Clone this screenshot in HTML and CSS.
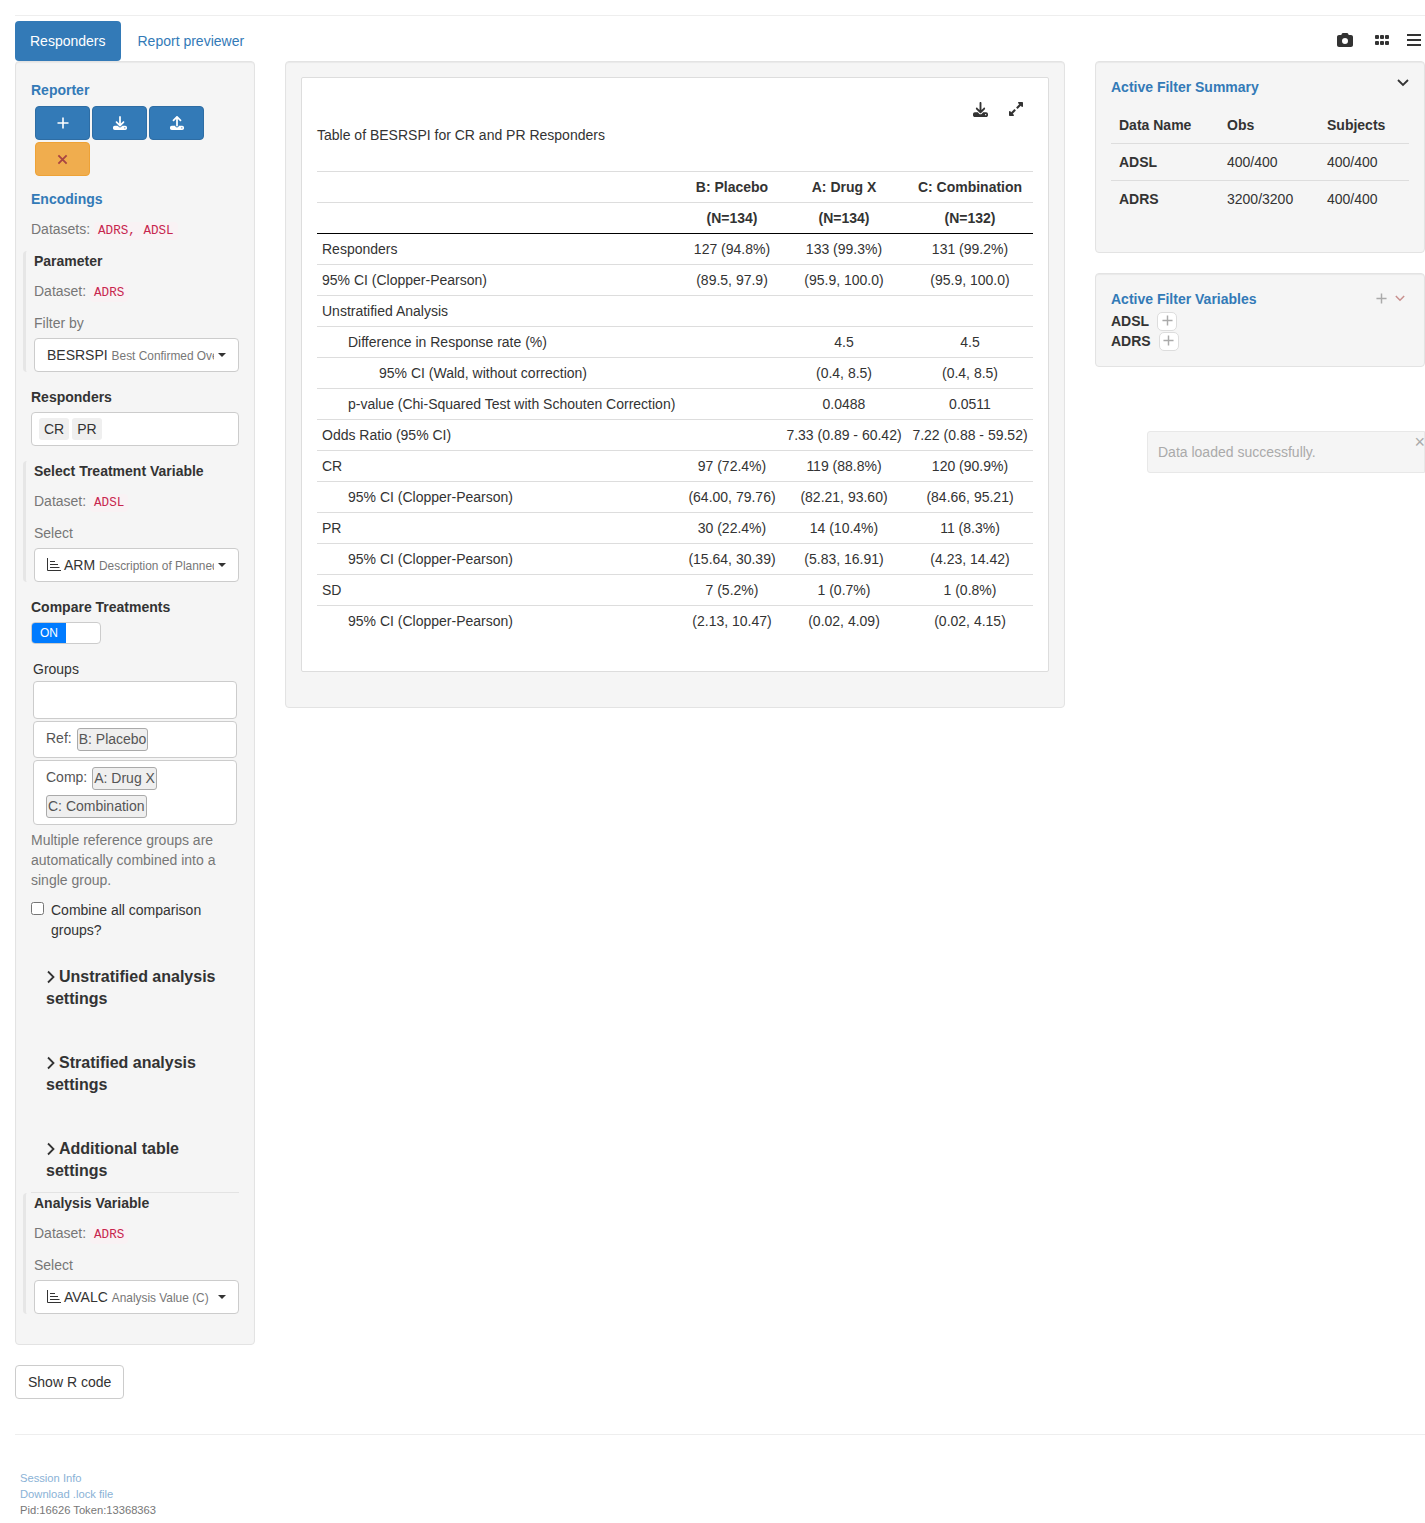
FILE: index.html
```html
<!DOCTYPE html>
<html lang="en">
<head>
<meta charset="UTF-8">
<meta name="viewport" content="width=device-width, initial-scale=1.0">
<title>Responders</title>
<link rel="stylesheet" href="styles.css">
</head>
<body>
<svg class="defs" aria-hidden="true">
  <symbol id="i-download" viewBox="0 0 512 512"><path d="M288 32c0-17.7-14.3-32-32-32s-32 14.3-32 32V274.7l-73.4-73.4c-12.5-12.5-32.8-12.5-45.3 0s-12.5 32.8 0 45.3l128 128c12.5 12.5 32.8 12.5 45.3 0l128-128c12.5-12.5 12.5-32.8 0-45.3s-32.8-12.5-45.3 0L288 274.7V32zM64 352c-35.3 0-64 28.7-64 64v32c0 35.3 28.7 64 64 64H448c35.3 0 64-28.7 64-64V416c0-35.3-28.7-64-64-64H346.5l-45.3 45.3c-25 25-65.5 25-90.5 0L165.5 352H64zm368 56a24 24 0 1 1 0 48 24 24 0 1 1 0-48z"/></symbol>
  <symbol id="i-upload" viewBox="0 0 512 512"><path d="M288 109.3V352c0 17.7-14.3 32-32 32s-32-14.3-32-32V109.3l-73.4 73.4c-12.5 12.5-32.8 12.5-45.3 0s-12.5-32.8 0-45.3l128-128c12.5-12.5 32.8-12.5 45.3 0l128 128c12.5 12.5 12.5 32.8 0 45.3s-32.8 12.5-45.3 0L288 109.3zM64 352H192c0 35.3 28.7 64 64 64s64-28.7 64-64H448c35.3 0 64 28.7 64 64v32c0 35.3-28.7 64-64 64H64c-35.3 0-64-28.7-64-64V416c0-35.3 28.7-64 64-64zM432 456a24 24 0 1 0 0-48 24 24 0 1 0 0 48z"/></symbol>
  <symbol id="i-camera" viewBox="0 0 512 512"><path d="M149.1 64.8L138.7 96H64C28.7 96 0 124.7 0 160V416c0 35.3 28.7 64 64 64H448c35.3 0 64-28.7 64-64V160c0-35.3-28.7-64-64-64H373.3L362.9 64.8C356.4 45.2 338.1 32 317.4 32H194.6c-20.7 0-39 13.2-45.5 32.8zM256 192a96 96 0 1 1 0 192 96 96 0 1 1 0-192z"/></symbol>
  <symbol id="i-grid" viewBox="0 0 14 12"><rect x="0" y="1" width="4" height="4" rx="1"/><rect x="5" y="1" width="4" height="4" rx="1"/><rect x="10" y="1" width="4" height="4" rx="1"/><rect x="0" y="7" width="4" height="4" rx="1"/><rect x="5" y="7" width="4" height="4" rx="1"/><rect x="10" y="7" width="4" height="4" rx="1"/></symbol>
  <symbol id="i-bars" viewBox="0 0 14 12"><rect y="0" width="14" height="2"/><rect y="5" width="14" height="2"/><rect y="10" width="14" height="2"/></symbol>
  <symbol id="i-expand" viewBox="0 0 448 512"><path d="M212.686 315.314L120 408l32.922 31.029c15.12 15.12 4.412 40.971-16.97 40.971h-112C10.697 480 0 469.255 0 456V344c0-21.382 25.803-32.09 40.922-16.971L72 360l92.686-92.686c6.248-6.248 16.379-6.248 22.627 0l25.373 25.373c6.249 6.248 6.249 16.378 0 22.627zm22.628-118.628L328 104l-32.922-31.029C279.958 57.851 290.666 32 312.048 32h112C437.303 32 448 42.745 448 56v112c0 21.382-25.803 32.09-40.922 16.971L376 152l-92.686 92.686c-6.248 6.248-16.379 6.248-22.627 0l-25.373-25.373c-6.249-6.248-6.249-16.378 0-22.627z"/></symbol>
  <symbol id="i-plus" viewBox="0 0 12 12"><path d="M6 .5v11M.5 6h11" fill="none" stroke="currentColor" stroke-width="1.600"/></symbol>
  <symbol id="i-times" viewBox="0 0 12 12"><path d="M1.500 1.500l9 9M10.500 1.500l-9 9" fill="none" stroke="currentColor" stroke-width="2"/></symbol>
  <symbol id="i-right" viewBox="0 0 8 14"><path d="M1 1.500l5.500 5.500-5.500 5.500" fill="none" stroke="currentColor" stroke-width="1.800"/></symbol>
  <symbol id="i-down" viewBox="0 0 12 8"><path d="M1 1l5 5 5-5" fill="none" stroke="currentColor" stroke-width="1.800"/></symbol>
  <symbol id="i-chart" viewBox="0 0 14 13"><path d="M.5 0v12.500H14M3 3.500h5M3 6.500h8M3 9.500h9.500" fill="none" stroke="currentColor" stroke-width="1"/></symbol>
</svg>

<div class="page">
  <hr class="top-rule">

  <div class="top-bar">
    <ul class="tabs">
      <li class="tab active"><a href="#">Responders</a></li>
      <li class="tab"><a href="#">Report previewer</a></li>
    </ul>
    <div class="tools">
      <svg class="tool-camera"><use href="#i-camera"/></svg>
      <svg class="tool-grid"><use href="#i-grid"/></svg>
      <svg class="tool-bars"><use href="#i-bars"/></svg>
    </div>
  </div>

  <div class="columns">
    <div class="left-col">
      <div class="well well-left">
        <div class="blue-label">Reporter</div>
        <div class="rep-buttons">
          <button type="button" class="btn-rep"><svg class="ic-plus"><use href="#i-plus"/></svg></button>
          <button type="button" class="btn-rep"><svg class="ic-load"><use href="#i-download"/></svg></button>
          <button type="button" class="btn-rep"><svg class="ic-load"><use href="#i-upload"/></svg></button>
          <button type="button" class="btn-rep btn-warn"><svg class="ic-times"><use href="#i-times"/></svg></button>
        </div>

        <div class="blue-label encodings">Encodings</div>
        <div class="datasets">Datasets: <code>ADRS, ADSL</code></div>

        <div class="enc-block first-block">
          <div class="bold-label">Parameter</div>
          <div class="dataset-line">Dataset: <code>ADRS</code></div>
          <div class="muted-label">Filter by</div>
          <div class="picker">
            <div class="picker-text">BESRSPI <small>Best Confirmed Overall Response by Investigator</small></div>
            <span class="caret"></span>
          </div>
        </div>

        <div class="bold-label section">Responders</div>
        <div class="tag-input">
          <span class="tag">CR</span>
          <span class="tag">PR</span>
        </div>

        <div class="enc-block section">
          <div class="bold-label">Select Treatment Variable</div>
          <div class="dataset-line">Dataset: <code>ADSL</code></div>
          <div class="muted-label">Select</div>
          <div class="picker">
            <div class="picker-text"><svg class="ic-chart"><use href="#i-chart"/></svg>ARM <small>Description of Planned Arm</small></div>
            <span class="caret"></span>
          </div>
        </div>

        <div class="bold-label section">Compare Treatments</div>
        <div class="toggle">
          <span class="toggle-on">ON</span>
        </div>

        <div class="groups-label">Groups</div>
        <div class="group-box group-empty"></div>
        <div class="group-box">
          <span class="group-name">Ref:</span>
          <span class="group-tag">B: Placebo</span>
        </div>
        <div class="group-box">
          <span class="group-name">Comp:</span>
          <span class="group-tag">A: Drug X</span>
          <span class="group-tag">C: Combination</span>
        </div>

        <p class="help">Multiple reference groups are automatically combined into a single group.</p>

        <label class="check-row">
          <input type="checkbox">
          <span>Combine all comparison groups?</span>
        </label>

        <div class="acc first-acc"><svg class="ic-right"><use href="#i-right"/></svg>Unstratified analysis settings</div>
        <div class="acc"><svg class="ic-right"><use href="#i-right"/></svg>Stratified analysis settings</div>
        <div class="acc"><svg class="ic-right"><use href="#i-right"/></svg>Additional table settings</div>
        <hr class="acc-rule">

        <div class="enc-block">
          <div class="bold-label">Analysis Variable</div>
          <div class="dataset-line">Dataset: <code>ADRS</code></div>
          <div class="muted-label">Select</div>
          <div class="picker">
            <div class="picker-text"><svg class="ic-chart"><use href="#i-chart"/></svg>AVALC <small>Analysis Value (C)</small></div>
            <span class="caret"></span>
          </div>
        </div>
      </div>
      <button type="button" class="btn-code">Show R code</button>
    </div>

    <div class="mid-col">
      <div class="well well-mid">
        <div class="card">
          <div class="card-tools">
            <svg class="ic-card-dl"><use href="#i-download"/></svg>
            <svg class="ic-card-ex"><use href="#i-expand"/></svg>
          </div>
          <div class="card-title">Table of BESRSPI for CR and PR Responders</div>
          <table class="res-table">
            <colgroup>
              <col>
              <col class="col-b">
              <col class="col-a">
              <col class="col-c">
            </colgroup>
            <thead>
              <tr><th></th><th>B: Placebo</th><th>A: Drug X</th><th>C: Combination</th></tr>
              <tr class="head-last"><th></th><th>(N=134)</th><th>(N=134)</th><th>(N=132)</th></tr>
            </thead>
            <tbody>
              <tr><td>Responders</td><td>127 (94.8%)</td><td>133 (99.3%)</td><td>131 (99.2%)</td></tr>
              <tr><td>95% CI (Clopper-Pearson)</td><td>(89.5, 97.9)</td><td>(95.9, 100.0)</td><td>(95.9, 100.0)</td></tr>
              <tr><td>Unstratified Analysis</td><td></td><td></td><td></td></tr>
              <tr><td class="indent1">Difference in Response rate (%)</td><td></td><td>4.5</td><td>4.5</td></tr>
              <tr><td class="indent2">95% CI (Wald, without correction)</td><td></td><td>(0.4, 8.5)</td><td>(0.4, 8.5)</td></tr>
              <tr><td class="indent1">p-value (Chi-Squared Test with Schouten Correction)</td><td></td><td>0.0488</td><td>0.0511</td></tr>
              <tr><td>Odds Ratio (95% CI)</td><td></td><td>7.33 (0.89 - 60.42)</td><td>7.22 (0.88 - 59.52)</td></tr>
              <tr><td>CR</td><td>97 (72.4%)</td><td>119 (88.8%)</td><td>120 (90.9%)</td></tr>
              <tr><td class="indent1">95% CI (Clopper-Pearson)</td><td>(64.00, 79.76)</td><td>(82.21, 93.60)</td><td>(84.66, 95.21)</td></tr>
              <tr><td>PR</td><td>30 (22.4%)</td><td>14 (10.4%)</td><td>11 (8.3%)</td></tr>
              <tr><td class="indent1">95% CI (Clopper-Pearson)</td><td>(15.64, 30.39)</td><td>(5.83, 16.91)</td><td>(4.23, 14.42)</td></tr>
              <tr><td>SD</td><td>7 (5.2%)</td><td>1 (0.7%)</td><td>1 (0.8%)</td></tr>
              <tr><td class="indent1">95% CI (Clopper-Pearson)</td><td>(2.13, 10.47)</td><td>(0.02, 4.09)</td><td>(0.02, 4.15)</td></tr>
            </tbody>
          </table>
        </div>
      </div>
    </div>

    <div class="right-col">
      <div class="well well-right">
        <div class="panel-head">
          <div class="blue-label">Active Filter Summary</div>
          <svg class="ic-down"><use href="#i-down"/></svg>
        </div>
        <table class="sum-table">
          <tr><th>Data Name</th><th>Obs</th><th>Subjects</th></tr>
          <tr><th>ADSL</th><td>400/400</td><td>400/400</td></tr>
          <tr><th>ADRS</th><td>3200/3200</td><td>400/400</td></tr>
        </table>
      </div>

      <div class="well well-vars">
        <div class="panel-head vars-head">
          <div class="blue-label">Active Filter Variables</div>
          <div class="panel-actions">
            <svg class="ic-head-plus"><use href="#i-plus"/></svg>
            <svg class="ic-head-down"><use href="#i-down"/></svg>
          </div>
        </div>
        <div class="var-row"><b>ADSL</b><span class="var-add"><svg class="ic-var"><use href="#i-plus"/></svg></span></div>
        <div class="var-row"><b>ADRS</b><span class="var-add"><svg class="ic-var"><use href="#i-plus"/></svg></span></div>
      </div>
    </div>
  </div>

  <hr class="foot-rule">

  <div class="footer">
    <div><a href="#">Session Info</a></div>
    <div><a href="#">Download .lock file</a></div>
    <div>Pid:16626 Token:13368363</div>
  </div>
</div>

<div class="toast">
  Data loaded successfully.
  <span class="toast-close">×</span>
</div>
</body>
</html>
```

FILE: styles.css
```css
* {
  box-sizing: border-box;
}

html, body {
  margin: 0;
  padding: 0;
}

body {
  position: relative;
  width: 1425px;
  overflow-x: hidden;
  font-family: "Liberation Sans", Arial, sans-serif;
  font-size: 14px;
  line-height: 20px;
  color: #333;
  background-color: #fff;
}

.defs {
  display: none;
}

svg {
  display: block;
  fill: currentColor;
}

a {
  color: #337ab7;
  text-decoration: none;
}

code {
  font-family: "Liberation Mono", monospace;
  font-size: 12.6px;
  color: #c7254e;
  background-color: #f9f2f4;
  border-radius: 4px;
  padding: 2px 4px;
}

.page {
  padding: 15px 0 5px 15px;
}

.top-rule {
  margin: 0 0 5px;
  border: 0;
  border-top: 1px solid #eee;
}

/* tabs */
.top-bar {
  display: flex;
  justify-content: space-between;
  align-items: center;
  height: 40px;
}

.tabs {
  display: flex;
  gap: 2px;
  list-style: none;
  margin: 0;
  padding: 0;
}

.tab a {
  display: block;
  padding: 10px 15px;
  border-radius: 4px;
}

.tab.active a {
  color: #fff;
  background-color: #337ab7;
}

.tools {
  display: flex;
  align-items: center;
  padding: 0 4px 2px 0;
  color: #333;
}

.tool-camera {
  width: 16px;
  height: 16px;
  margin-right: 22px;
}

.tool-grid {
  width: 14px;
  height: 12px;
  margin-right: 18px;
}

.tool-bars {
  width: 14px;
  height: 12px;
}

/* columns */
.columns {
  display: grid;
  grid-template-columns: 240px 780px 330px;
  gap: 30px;
  align-items: start;
}

.well {
  background-color: #f5f5f5;
  border: 1px solid #e3e3e3;
  border-radius: 4px;
  box-shadow: inset 0 1px 1px rgba(0, 0, 0, .05);
}

.well-left {
  padding: 18px 15px 30px;
}

.blue-label {
  color: #337ab7;
  font-weight: bold;
}

.bold-label {
  font-weight: bold;
}

.section {
  margin-top: 15px;
}

.rep-buttons {
  display: flex;
  flex-wrap: wrap;
  gap: 2px;
  width: 173px;
  margin: 6px 0 0 4px;
}

.btn-rep {
  display: flex;
  justify-content: center;
  align-items: center;
  width: 55px;
  height: 34px;
  padding: 0;
  color: #fff;
  background-color: #337ab7;
  border: 1px solid #2e6da4;
  border-radius: 4px;
}

.btn-warn {
  color: #a94442;
  background-color: #f0ad4e;
  border-color: #eea236;
}

.ic-plus {
  width: 12px;
  height: 12px;
}

.ic-load {
  width: 14px;
  height: 14px;
}

.ic-times {
  width: 11px;
  height: 11px;
}

.encodings {
  margin-top: 13px;
}

.datasets {
  margin-top: 10px;
  color: #777;
}

.first-block {
  margin-top: 10px;
}

.enc-block {
  margin-left: -8px;
  padding-left: 8px;
  border-left: 3px solid #e6e6e6;
  border-radius: 4px;
}

.dataset-line {
  margin-top: 10px;
  color: #777;
}

.muted-label {
  margin-top: 10px;
  color: #777;
}

.picker {
  display: flex;
  align-items: center;
  height: 34px;
  margin-top: 5px;
  padding: 0 12px;
  background-color: #fff;
  border: 1px solid #ccc;
  border-radius: 4px;
}

.picker-text {
  flex: 1;
  min-width: 0;
  overflow: hidden;
  white-space: nowrap;
}

.picker-text small {
  font-size: 85%;
  color: #777;
}

.ic-chart {
  display: inline-block;
  width: 14px;
  height: 13px;
  margin-right: 3px;
  vertical-align: -1px;
}

.caret {
  flex: none;
  width: 0;
  height: 0;
  margin-left: 4px;
  border-top: 4px solid #333;
  border-left: 4px solid transparent;
  border-right: 4px solid transparent;
}

.tag-input {
  display: flex;
  align-items: center;
  gap: 3px;
  height: 34px;
  margin-top: 5px;
  padding-left: 7px;
  background-color: #fff;
  border: 1px solid #ccc;
  border-radius: 4px;
}

.tag {
  height: 22px;
  line-height: 22px;
  padding: 0 5px;
  background-color: #efefef;
  border-radius: 3px;
}

.toggle {
  width: 70px;
  height: 22px;
  margin-top: 5px;
  background-color: #fff;
  border: 1px solid #ccc;
  border-radius: 4px;
  overflow: hidden;
}

.toggle-on {
  display: block;
  width: 34px;
  height: 20px;
  font-size: 12px;
  text-align: center;
  color: #fff;
  background-color: #007bff;
}

.groups-label {
  margin: 15px 0 0 2px;
}

.group-box {
  display: flex;
  flex-wrap: wrap;
  gap: 5px;
  width: 204px;
  margin: 2px 0 0 2px;
  padding: 6px 12px;
  color: #555;
  background-color: #fff;
  border: 1px solid #ccc;
  border-radius: 4px;
}

.group-empty {
  height: 38px;
}

.group-tag {
  height: 23px;
  line-height: 21px;
  padding: 0 1px;
  background-color: #efefef;
  border: 1px solid #aaa;
  border-radius: 3px;
}

.help {
  margin: 5px 0 0;
  color: #777;
}

.check-row {
  display: flex;
  gap: 7px;
  margin-top: 10px;
}

.check-row input {
  flex: none;
  width: 13px;
  height: 13px;
  margin: 2px 0 0;
}

.acc {
  margin-top: 42px;
  padding-left: 15px;
  font-size: 16px;
  line-height: 22px;
  font-weight: bold;
}

.first-acc {
  margin-top: 26px;
}

.ic-right {
  display: inline-block;
  width: 8px;
  height: 14px;
  margin: 0 4px 0 1px;
  vertical-align: -2px;
}

.acc-rule {
  margin: 10px 0 0;
  border: 0;
  border-top: 1px solid #e3e3e3;
}

.btn-code {
  display: block;
  height: 34px;
  margin-top: 20px;
  padding: 0 12px;
  font: inherit;
  color: #333;
  background-color: #fff;
  border: 1px solid #ccc;
  border-radius: 4px;
}

/* table card */
.well-mid {
  padding: 15px 15px 35px;
}

.card {
  padding: 0 15px 34px;
  background-color: #fff;
  border: 1px solid #ddd;
  border-radius: 2px;
}

.card-tools {
  display: flex;
  justify-content: flex-end;
  align-items: center;
  height: 16px;
  margin-top: 23px;
  padding-right: 10px;
}

.ic-card-dl {
  width: 15px;
  height: 15px;
  margin-right: 21px;
}

.ic-card-ex {
  width: 14px;
  height: 16px;
}

.card-title {
  margin-top: 8px;
  margin-bottom: 26px;
}

.res-table {
  width: 716px;
  border-collapse: collapse;
}

.col-b {
  width: 98px;
}

.col-a,
.col-c {
  width: 126px;
}

.res-table th,
.res-table td {
  height: 31px;
  padding: 5px;
  border-top: 1px solid #ddd;
  text-align: center;
  white-space: nowrap;
}

.res-table .head-last th {
  border-bottom: 1px solid #000;
}

.res-table td:first-child {
  text-align: left;
}

.res-table td.indent1 {
  padding-left: 31px;
}

.res-table td.indent2 {
  padding-left: 62px;
}

/* right panels */
.well-right {
  height: 192px;
  padding: 15px;
}

.well-vars {
  margin-top: 20px;
  padding: 15px;
}

.panel-head {
  display: flex;
  justify-content: space-between;
  align-items: flex-start;
}

.vars-head {
  margin-bottom: 2px;
}

.ic-down {
  width: 12px;
  height: 8px;
  margin: 2px 0 0 0;
}

.sum-table {
  width: 298px;
  margin: 10px 0 0;
  border-collapse: collapse;
}

.sum-table th,
.sum-table td {
  padding: 8px;
  text-align: left;
  border-top: 1px solid #ddd;
}

.sum-table tr:first-child th {
  border-top: 0;
}

.sum-table tr > :first-child {
  width: 108px;
}

.sum-table tr > :nth-child(2) {
  width: 100px;
}

.panel-actions {
  display: flex;
  align-items: center;
  padding-right: 4px;
}

.ic-head-plus {
  width: 11px;
  height: 11px;
  margin: 4px 8px 0 0;
  color: #aaa;
}

.ic-head-down {
  width: 10px;
  height: 7px;
  margin-top: 3px;
  color: #c9908e;
}

.var-row {
  display: flex;
  align-items: center;
  gap: 8px;
  height: 20px;
}

.var-add {
  display: flex;
  justify-content: center;
  align-items: flex-start;
  width: 20px;
  height: 19px;
  padding-top: 2px;
  background-color: #fff;
  border: 1px solid #ddd;
  border-radius: 5px;
  color: #aaa;
}

.ic-var {
  width: 11px;
  height: 11px;
}

/* footer */
.foot-rule {
  margin: 35px 0 0;
  border: 0;
  border-top: 1px solid #eee;
}

.footer {
  margin-top: 35px;
  padding-left: 5px;
  font-size: 11.2px;
  line-height: 16px;
  color: #777;
}

.footer a {
  color: #8ab2d6;
}

/* notification, sits over the page */
.toast {
  position: absolute;
  top: 431px;
  right: 0;
  width: 278px;
  height: 42px;
  padding: 10px;
  color: #aaa;
  background-color: #f5f5f5;
  border: 1px solid #e8e8e8;
  border-radius: 3px 0 0 3px;
}

.toast-close {
  position: absolute;
  top: 0;
  right: -1px;
  font-size: 18px;
  line-height: 20px;
  color: #aaa;
}
```
